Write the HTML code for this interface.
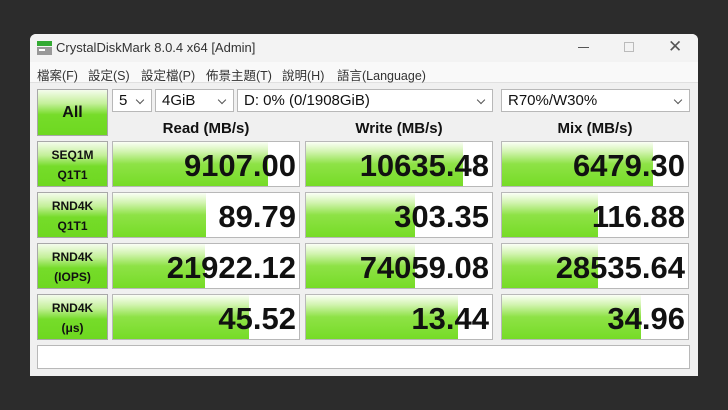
<!DOCTYPE html>
<html><head><meta charset="utf-8"><style>
*{margin:0;padding:0;box-sizing:border-box}
body{width:728px;height:410px;background:#2c2c2c;position:relative;overflow:hidden;font-family:"Liberation Sans","Noto Sans CJK TC",sans-serif}
.win{position:absolute;left:30px;top:34px;width:668px;height:342px;background:#f0f0f0;border-radius:6px 6px 0 0;overflow:hidden}
.title{position:absolute;left:0;top:0;width:100%;height:28px;background:#f3f3f3;font-size:13px;color:#333}
.title span{position:absolute;left:26px;top:6px}
.menu{position:absolute;left:0;top:28px;width:100%;height:21px;background:#f9f9f9;font-size:12.5px;color:#333;border-bottom:1px solid #e0e0e0}
.menu span{position:absolute;top:3px}
.a{position:absolute}
.btn{position:absolute;border:1px solid #a8a8a8;background:linear-gradient(#f4fcec 0%,#c4f09a 30%,#76dc2a 55%,#6ed820 100%);font-weight:bold;text-align:center;color:#111}
.sel{position:absolute;top:55px;height:23px;background:#fff;border:1px solid #b8b8b8;font-size:15px;color:#111;padding-left:6px;line-height:21px}
.sel:after{content:"";position:absolute;right:8px;top:7px;width:5px;height:5px;border-right:1px solid #555;border-bottom:1px solid #555;transform:rotate(45deg)}
.cell{position:absolute;width:188px;height:46px;background:#fff;border:1px solid #b8b8b8;overflow:hidden}
.cell .f{position:absolute;left:0;top:0;bottom:0;background:linear-gradient(#fbfff6 0%,#d2f4b0 22%,#8ee246 50%,#76dc26 100%)}
.cell .v{position:absolute;right:3px;top:6px;font-size:31px;font-weight:bold;color:#111}
.hd{position:absolute;top:86px;font-size:15px;font-weight:bold;color:#111;text-align:center;width:188px}
</style></head><body>
<div class="win">
<div class="title">
<svg class="a" style="left:6px;top:6px" width="17" height="16"><rect x="1" y="1" width="15" height="5" fill="#3a3"/><rect x="1" y="7" width="15" height="8" fill="#999"/><rect x="3" y="9" width="6" height="2" fill="#fff"/></svg>
<span>CrystalDiskMark 8.0.4 x64 [Admin]</span>
<div class="a" style="left:548px;top:13px;width:11px;height:1px;background:#555"></div>
<div class="a" style="left:594px;top:8px;width:10px;height:10px;border:1px solid #bbb"></div>
<div class="a" style="left:638px;top:3px;font-size:17px;color:#555">✕</div>
</div>
<div class="menu"><span style="left:7px">檔案(F)</span><span style="left:58px">設定(S)</span><span style="left:111px">設定檔(P)</span><span style="left:176px">佈景主題(T)</span><span style="left:252px">說明(H)</span><span style="left:307px">語言(Language)</span></div>
<div class="btn" style="left:7px;top:55px;width:71px;height:47px;font-size:16px;line-height:45px">All</div>
<div class="sel" style="left:82px;width:40px">5</div>
<div class="sel" style="left:125px;width:79px">4GiB</div>
<div class="sel" style="left:207px;width:256px">D: 0% (0/1908GiB)</div>
<div class="sel" style="left:471px;width:189px">R70%/W30%</div>
<div class="hd" style="left:82px">Read (MB/s)</div>
<div class="hd" style="left:275px">Write (MB/s)</div>
<div class="hd" style="left:471px">Mix (MB/s)</div>

<div class="btn" style="left:7px;top:107px;width:71px;height:46px;font-size:12px;line-height:20px;padding-top:3px">SEQ1M<br>Q1T1</div>
<div class="btn" style="left:7px;top:158px;width:71px;height:46px;font-size:12px;line-height:20px;padding-top:3px">RND4K<br>Q1T1</div>
<div class="btn" style="left:7px;top:209px;width:71px;height:46px;font-size:12px;line-height:20px;padding-top:3px">RND4K<br>(IOPS)</div>
<div class="btn" style="left:7px;top:260px;width:71px;height:46px;font-size:12px;line-height:20px;padding-top:3px">RND4K<br>(μs)</div>

<div class="cell" style="left:82px;top:107px"><div class="f" style="width:155px"></div><div class="v">9107.00</div></div>
<div class="cell" style="left:275px;top:107px"><div class="f" style="width:157px"></div><div class="v">10635.48</div></div>
<div class="cell" style="left:471px;top:107px"><div class="f" style="width:151px"></div><div class="v">6479.30</div></div>

<div class="cell" style="left:82px;top:158px"><div class="f" style="width:93px"></div><div class="v">89.79</div></div>
<div class="cell" style="left:275px;top:158px"><div class="f" style="width:109px"></div><div class="v">303.35</div></div>
<div class="cell" style="left:471px;top:158px"><div class="f" style="width:96px"></div><div class="v">116.88</div></div>

<div class="cell" style="left:82px;top:209px"><div class="f" style="width:92px"></div><div class="v">21922.12</div></div>
<div class="cell" style="left:275px;top:209px"><div class="f" style="width:109px"></div><div class="v">74059.08</div></div>
<div class="cell" style="left:471px;top:209px"><div class="f" style="width:96px"></div><div class="v">28535.64</div></div>

<div class="cell" style="left:82px;top:260px"><div class="f" style="width:136px"></div><div class="v">45.52</div></div>
<div class="cell" style="left:275px;top:260px"><div class="f" style="width:152px"></div><div class="v">13.44</div></div>
<div class="cell" style="left:471px;top:260px"><div class="f" style="width:139px"></div><div class="v">34.96</div></div>

<div class="a" style="left:7px;top:311px;width:653px;height:24px;background:#fff;border:1px solid #b8b8b8"></div>
</div>
</body></html>
